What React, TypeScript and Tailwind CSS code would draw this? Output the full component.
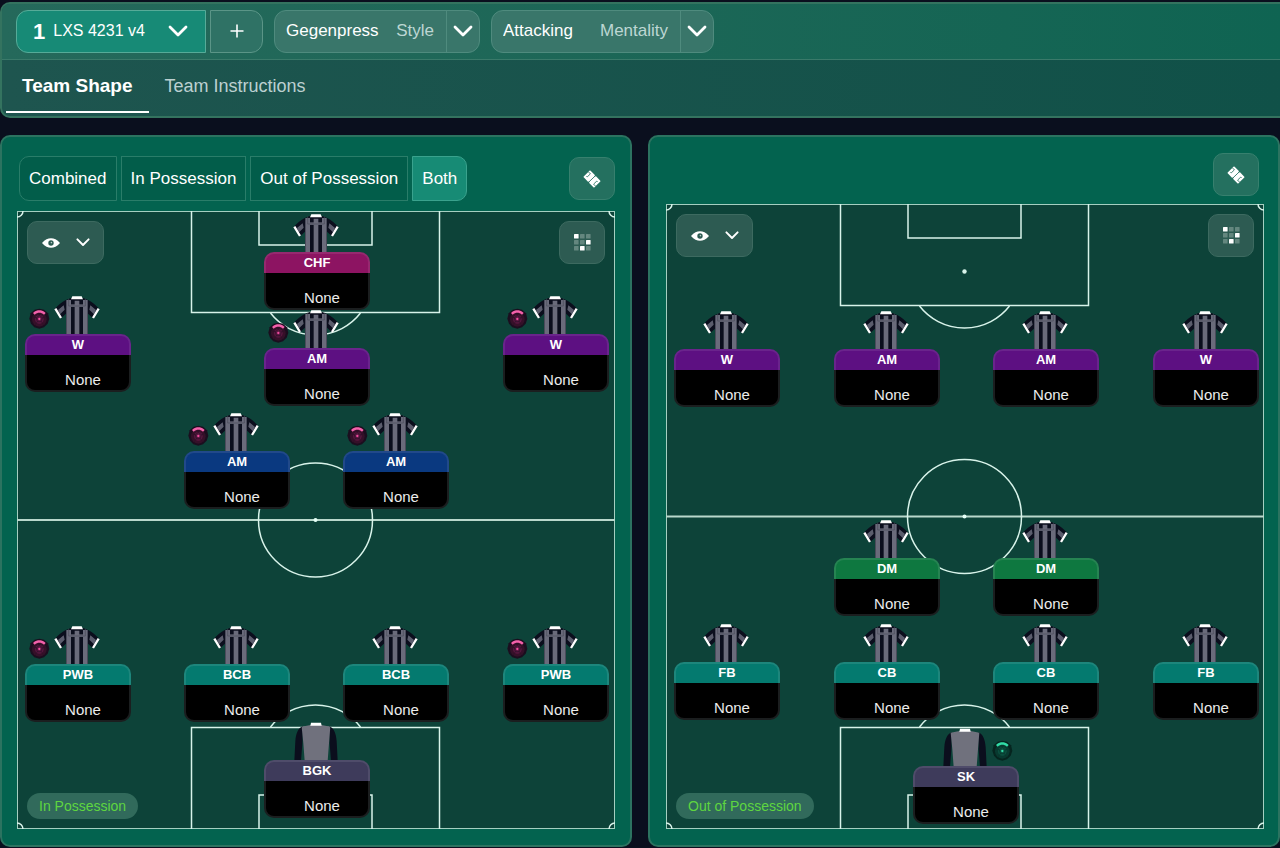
import { ReactNode } from "react";
import { clsx } from "clsx";

type Tone = "pink" | "purple" | "blue" | "teal" | "green" | "slate";
type Side = "left" | "right";

interface Player {
  role: string;
  tone: Tone;
  // centre of the card and top of the shirt, in pitch units
  x: number;
  y: number;
  keeper?: boolean;
  ball?: Side;
}

const PITCH_WIDTH = 598;

const inPossession: Player[] = [
  { role: "CHF", tone: "pink", x: 300, y: 3 },
  { role: "W", tone: "purple", x: 61, y: 85, ball: "left" },
  { role: "AM", tone: "purple", x: 300, y: 99, ball: "left" },
  { role: "W", tone: "purple", x: 539, y: 85, ball: "left" },
  { role: "AM", tone: "blue", x: 220, y: 202, ball: "left" },
  { role: "AM", tone: "blue", x: 379, y: 202, ball: "left" },
  { role: "PWB", tone: "teal", x: 61, y: 415, ball: "left" },
  { role: "BCB", tone: "teal", x: 220, y: 415 },
  { role: "BCB", tone: "teal", x: 379, y: 415 },
  { role: "PWB", tone: "teal", x: 539, y: 415, ball: "left" },
  { role: "BGK", tone: "slate", x: 300, y: 511, keeper: true },
];

const outOfPossession: Player[] = [
  { role: "W", tone: "purple", x: 61, y: 107 },
  { role: "AM", tone: "purple", x: 221, y: 107 },
  { role: "AM", tone: "purple", x: 380, y: 107 },
  { role: "W", tone: "purple", x: 540, y: 107 },
  { role: "DM", tone: "green", x: 221, y: 316 },
  { role: "DM", tone: "green", x: 380, y: 316 },
  { role: "FB", tone: "teal", x: 61, y: 420 },
  { role: "CB", tone: "teal", x: 221, y: 420 },
  { role: "CB", tone: "teal", x: 380, y: 420 },
  { role: "FB", tone: "teal", x: 540, y: 420 },
  { role: "SK", tone: "slate", x: 300, y: 524, keeper: true, ball: "right" },
];

const toneClasses: Record<Tone, string> = {
  pink: "bg-[#8d1462] border-[#96296f]",
  purple: "bg-[#5d1082] border-[#6a248c]",
  blue: "bg-[#0a3980] border-[#21498a]",
  teal: "bg-[#047a6f] border-[#1d867c]",
  green: "bg-[#0e7840] border-[#268452]",
  slate: "bg-[#3e3b5b] border-[#4f4c6a]",
};

function Chevron({ small = false }: { small?: boolean }) {
  return (
    <svg
      viewBox="0 0 20 12"
      className={clsx("pointer-events-none shrink-0", small ? "w-[14px]" : "w-5")}
      fill="none"
      stroke="white"
      strokeWidth="2.8"
      strokeLinecap="round"
      strokeLinejoin="round"
      aria-hidden="true"
    >
      <path d="M2 2l8 8 8-8" />
    </svg>
  );
}

function EyeIcon() {
  return (
    <svg viewBox="0 0 18 10" className="w-[18px]" aria-hidden="true">
      <path d="M0 5C3 1.4 6 .2 9 .2S15 1.4 18 5c-3 3.600-6 4.800-9 4.800S3 8.600 0 5z" fill="white" />
      <circle cx="9" cy="5" r="2.7" fill="#2d5b52" />
      <circle cx="9.4" cy="4.6" r=".8" fill="#b9cdc8" />
    </svg>
  );
}

function GridIcon() {
  const lit = [0, 5, 7];
  return (
    <svg viewBox="0 0 17 17" className="w-[17px]" aria-hidden="true">
      {Array.from({ length: 9 }, (_, i) => (
        <rect
          key={i}
          x={(i % 3) * 6}
          y={Math.floor(i / 3) * 6}
          width="4.6"
          height="4.6"
          rx=".6"
          fill={lit.includes(i) ? "white" : "#64877f"}
        />
      ))}
    </svg>
  );
}

function TacticIcon() {
  return (
    <svg viewBox="0 0 18 18" className="w-[18px]" aria-hidden="true">
      <g transform="rotate(46 9 9)">
        <path
          d="M2 4.200h6.500v1.300h1V4.200H16a.6.6 0 0 1 .6.6v8.400a.6.6 0 0 1-.6.6H9.500v-1.300h-1v1.300H2a.6.6 0 0 1-.6-.6V4.800a.6.6 0 0 1 .6-.6z"
          fill="white"
        />
        <g fill="none" stroke="#24705f" strokeWidth=".8">
          <path d="M9 5v8" />
          <path d="M1.400 6.600h2.800v4.400H3" />
          <path d="M16.600 11.400h-2.800V7H15" />
        </g>
      </g>
    </svg>
  );
}

function Shirt() {
  return (
    <svg viewBox="0 0 138 117" className="h-[39px] w-[46px]" aria-hidden="true">
      <path
        d="M50 6L34 13C22 19 12 28 3 38l18 29 15-14v64h66V53l15 14 18-29c-9-10-19-19-31-25L88 6z"
        fill="#0b0e1d"
      />
      <g fill="#6a6b7b">
        <path d="M37 12h14v105H37zM62 14h14v103H62zM87 12h14v105H87z" />
        <path d="M12 42l17-14 3 13-14 14zM126 42l-17-14-3 13 14 14z" opacity=".85" />
        <path d="M44 25h50v8H44z" opacity=".9" />
      </g>
      <path d="M44 8v22h50V8" fill="none" stroke="#4a4b5b" strokeWidth="2" />
      <path d="M55 1h28l4 9H51z" fill="white" />
      <path d="M4 38l17 28M134 38l-17 28" stroke="white" strokeWidth="7" />
    </svg>
  );
}

function KeeperShirt() {
  return (
    <svg viewBox="0 0 138 117" className="h-[39px] w-[46px]" aria-hidden="true">
      <path
        d="M30 13C14 18 9 36 7 58L4 117h20l4-52zM108 13c16 5 21 23 23 45l3 59h-20l-4-52z"
        fill="#0b0e1d"
      />
      <path d="M26 14l30-6h26l30 6-4 50-4 53H35l-4-53z" fill="#70717d" />
      <path d="M54 2h30l2 9H52z" fill="white" />
    </svg>
  );
}

function Ball({ side }: { side: Side }) {
  const left = side === "left";
  return (
    <svg
      viewBox="0 0 63 63"
      className={clsx("absolute top-[12px] size-[21px]", left ? "left-[4px]" : "right-[6px]")}
      aria-hidden="true"
    >
      <path
        d="M31 2l14 3 12 11 4 16-5 15-11 11-14 4-15-4L6 47 1 32 5 16 17 5z"
        fill={left ? "#1b0e1f" : "#06251f"}
      />
      <circle cx="31" cy="34" r="22" fill={left ? "#361029" : "#083a30"} />
      <circle cx="31" cy="34" r="13" fill={left ? "#57173f" : "#0c5241"} />
      <path
        d="M31 22l9 7-3 12H25l-3-12zM31 22V13M40 29l11-3M37 41l7 10M25 41l-7 10M22 29l-11-3"
        fill="none"
        stroke={left ? "#2b1027" : "#07352b"}
        strokeWidth="2"
      />
      <circle cx="31" cy="33" r="3.5" fill={left ? "#f04c9e" : "#31dba6"} />
      <path
        d="M12 15c7-7 14-8 19-8s12 1 19 8l-5 5c-5-5-9-6-14-6s-9 1-14 6z"
        fill={left ? "#f461ab" : "#31dba6"}
      />
    </svg>
  );
}

function PlayerCard({ player, height }: { player: Player; height: number }) {
  return (
    <div
      className="absolute w-[106px] -translate-x-1/2"
      style={{
        left: `${(player.x / PITCH_WIDTH) * 100}%`,
        top: `${(player.y / height) * 100}%`,
      }}
    >
      <div className="flex h-[38px] justify-center pr-[2px]">
        {player.keeper ? <KeeperShirt /> : <Shirt />}
      </div>
      {player.ball && <Ball side={player.ball} />}
      <div className="relative">
        <div
          className={clsx(
            "h-[21px] rounded-t-[10px] border-2 border-b-0 text-center text-[13px] leading-[18px] font-bold text-white",
            toneClasses[player.tone]
          )}
        >
          {player.role}
        </div>
        <div className="flex h-[37px] items-end justify-center rounded-b-[10px] border-2 border-t-0 border-[#1b1e1f] bg-black pl-[10px] text-[15px] leading-5 text-[#ececec]">
          None
        </div>
      </div>
    </div>
  );
}

function PitchLines({ height: h }: { height: number }) {
  return (
    <svg
      viewBox={`0 0 ${PITCH_WIDTH} ${h}`}
      className="absolute inset-0 size-full"
      fill="none"
      stroke="#d8f3ea"
      strokeWidth="1.5"
      aria-hidden="true"
    >
      <rect x=".5" y=".5" width={PITCH_WIDTH - 1} height={h - 1} strokeWidth="1" stroke="#a5cfc1" />
      <path d={`M0 ${h / 2}H598`} strokeWidth="2" stroke="#b9d8cc" />
      <circle cx="298.5" cy={h / 2} r="57" />
      <circle cx="298.5" cy={h / 2} r="2" fill="#e6fff7" stroke="none" />
      {["", `matrix(1 0 0 -1 0 ${h})`].map((flip) => (
        <g key={flip} transform={flip || undefined}>
          <path d="M174.500 0v101.500h248V0M242 0v34h113V0" />
          <path d="M253.500 102a57 57 0 0 0 90 0" />
          <path d="M6 0a6 6 0 0 1-6 6M592 0a6 6 0 0 0 6 6" />
          <circle cx="298.5" cy="67.5" r="2.2" fill="#d8f3ea" stroke="none" />
        </g>
      ))}
    </svg>
  );
}

const pitchButton =
  "flex h-[43px] items-center justify-center rounded-[10px] border border-[#3d6a60] bg-[#2d5b52]";

function Pitch({
  label,
  players,
  height,
  className,
}: {
  label: string;
  players: Player[];
  height: number;
  className: string;
}) {
  return (
    <div className={clsx("relative flex flex-col justify-between bg-[#0d4339] p-[10px]", className)}>
      <PitchLines height={height} />
      <div className="relative flex justify-between">
        <button aria-label="View options" className={clsx(pitchButton, "w-[77px] gap-4")}>
          <EyeIcon />
          <Chevron small />
        </button>
        <button aria-label="Positions grid" className={clsx(pitchButton, "w-[46px]")}>
          <GridIcon />
        </button>
      </div>
      <span className="relative self-start rounded-full bg-[#316a5b] px-3 text-[14px] leading-[26px] text-[#5fd640]">
        {label}
      </span>
      {players.map((player) => (
        <PlayerCard key={`${player.x}-${player.y}`} player={player} height={height} />
      ))}
    </div>
  );
}

function Panel({ children, className }: { children: ReactNode; className: string }) {
  return (
    <section
      className={clsx(
        "min-w-0 rounded-[10px] border-2 border-[#2c7360] bg-[#03634f] pb-4",
        className
      )}
    >
      {children}
    </section>
  );
}

function TacticButton() {
  return (
    <button
      aria-label="Tactic settings"
      className="flex h-[43px] w-[46px] items-center justify-center rounded-[10px] border border-[#37806e] bg-[#24705f]"
    >
      <TacticIcon />
    </button>
  );
}

function Setting({ name, value, className }: { name: string; value: string; className: string }) {
  return (
    <label
      className={clsx(
        "flex h-[43px] items-center rounded-[12px] border border-[#4f8b7e] bg-[#39766a] pl-[11px] text-[17px]",
        className
      )}
    >
      <select
        defaultValue={value}
        className="field-sizing-content appearance-none bg-transparent text-white outline-none"
      >
        <option>{value}</option>
      </select>
      <span className="mr-3 ml-auto text-[#bdd6d3]">{name}</span>
      <span className="flex h-full w-[33px] items-center justify-center border-l border-[#4f8b7e]">
        <Chevron />
      </span>
    </label>
  );
}

const phases = ["Combined", "In Possession", "Out of Possession", "Both"];

export default function App() {
  return (
    <div className="min-h-screen bg-[#0a0f1e] pt-[2px] font-['Liberation_Sans',Arial,sans-serif] text-white">
      <header className="overflow-hidden rounded-l-[10px] border-2 border-r-0 border-[#34735f] bg-linear-to-r from-[#1e554f] to-[#105148]">
        <div className="flex h-14 items-center gap-[11px] border-b border-[#3a7a6a] bg-linear-to-r from-[#25695b] to-[#0f6452] pb-px pl-[14px]">
          <div className="flex gap-1">
            <label className="flex h-[43px] w-[190px] items-center rounded-l-[12px] border border-[#56ab98] bg-[#178a76] pr-[17px] pl-4">
              <span className="text-[22px] font-bold">1</span>
              <select
                aria-label="Tactic"
                defaultValue="LXS 4231 v4"
                className="ml-2 min-w-0 flex-1 appearance-none bg-transparent text-[16px] outline-none"
              >
                <option>LXS 4231 v4</option>
              </select>
              <Chevron />
            </label>
            <button
              aria-label="Add tactic"
              className="flex h-[43px] w-[53px] items-center justify-center rounded-r-[12px] border border-[#5b9587] bg-[#2f7265]"
            >
              <svg viewBox="0 0 14 14" className="w-[14px]" stroke="white" strokeWidth="1.6">
                <path d="M7 .5v13M.5 7h13" />
              </svg>
            </button>
          </div>
          <Setting name="Style" value="Gegenpress" className="w-[206px]" />
          <Setting name="Mentality" value="Attacking" className="w-[223px]" />
        </div>
        <nav className="flex h-14 pb-[3px] pl-1 leading-[52px]">
          <a href="#shape" className="border-b-2 border-white px-4 text-[19px] font-bold">
            Team Shape
          </a>
          <a href="#instructions" className="px-4 text-[18px] text-[#bcd0d1]">
            Team Instructions
          </a>
        </nav>
      </header>

      <main className="mt-[17px] grid grid-cols-2 gap-4">
        <Panel className="px-[15px] pt-[19px]">
          <div className="mb-[10px] flex items-center justify-between pl-[2px]">
            <div className="flex gap-1">
              {phases.map((phase) => (
                <button
                  key={phase}
                  className={clsx(
                    "h-[45px] border px-[9px] text-[17px] whitespace-nowrap first:rounded-l-[10px] last:rounded-r-[10px]",
                    phase === "Both"
                      ? "border-[#3aa28d] bg-[#178b75]"
                      : "border-[#2a7d69] bg-[#025d4a]"
                  )}
                >
                  {phase}
                </button>
              ))}
            </div>
            <TacticButton />
          </div>
          <Pitch
            label="In Possession"
            players={inPossession}
            height={618}
            className="aspect-[598/618]"
          />
        </Panel>
        <Panel className="pt-4 pr-[14px] pl-4">
          <div className="mb-2 flex justify-end pr-[5px]">
            <TacticButton />
          </div>
          <Pitch
            label="Out of Possession"
            players={outOfPossession}
            height={625}
            className="aspect-[598/625]"
          />
        </Panel>
      </main>
    </div>
  );
}
